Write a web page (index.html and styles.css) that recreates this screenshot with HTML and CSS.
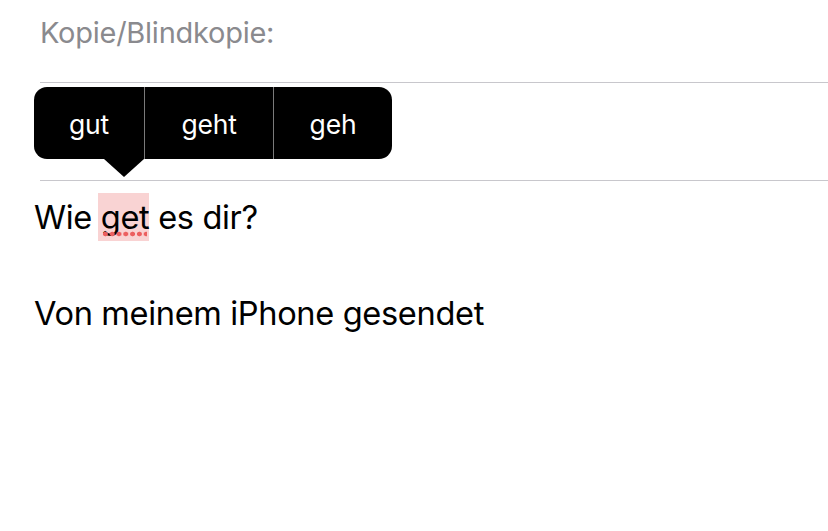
FILE: index.html
```html
<!DOCTYPE html>
<html lang="de">
<head>
<meta charset="utf-8">
<title>Mail</title>
<link rel="stylesheet" href="styles.css">
</head>
<body>
<div class="compose">
  <div class="field field-cc">
    <span class="label">Kopie/Blindkopie:</span>
  </div>
  <div class="field field-subject"></div>
  <div class="body">
    <p class="line">Wie <span class="misspelled">get<span class="dots"></span></span> es dir?</p>
    <p class="line empty">&nbsp;</p>
    <p class="line">Von meinem iPhone gesendet</p>
  </div>
  <div class="suggest">
    <div class="suggest-bar">
      <span class="opt opt-1">gut</span>
      <span class="opt opt-2">geht</span>
      <span class="opt opt-3">geh</span>
    </div>
    <div class="suggest-arrow"></div>
  </div>
</div>
</body>
</html>
```

FILE: styles.css
```css
html, body {
  margin: 0;
  padding: 0;
  background: #ffffff;
}
body {
  font-family: Inter, "Noto Sans", sans-serif;
  color: #000;
  width: 828px;
  height: 531px;
  overflow: hidden;
}
.compose {
  position: relative;
  height: 531px;
}
.field {
  margin-left: 40px;
  border-bottom: 1px solid #c8c7cc;
  box-sizing: border-box;
}
.field-cc {
  height: 83px;
  padding-top: 15px;
}
.label {
  font-size: 29px;
  line-height: 36px;
  color: #8a8a8e;
  letter-spacing: -0.25px;
}
.field-subject {
  height: 98px;
}
.body {
  padding-left: 34px;
  padding-top: 12px;
}
.line {
  margin: 0;
  font-size: 32.6px;
  line-height: 48px;
  letter-spacing: -0.35px;
}
.misspelled {
  position: relative;
  background: #f9d3d3;
  padding: 4px 0 4px 3px;
  margin-left: -3px;
}
.dots {
  position: absolute;
  left: 4px;
  right: 2px;
  bottom: 4px;
  height: 6px;
  background-image: radial-gradient(circle, #ec5f5f 2.1px, transparent 2.7px);
  background-size: 6.8px 6px;
  background-repeat: repeat-x;
}
.suggest {
  position: absolute;
  left: 34px;
  top: 87px;
}
.suggest-bar {
  display: flex;
  height: 72px;
  background: #000;
  border-radius: 13px;
  overflow: hidden;
}
.opt {
  display: flex;
  align-items: center;
  justify-content: center;
  color: #fff;
  font-size: 26.5px;
  letter-spacing: -0.2px;
  padding-top: 2px;
  box-sizing: border-box;
}
.opt-1 { width: 111px; border-right: 1px solid #7a7a7a; }
.opt-2 { width: 129px; border-right: 1px solid #7a7a7a; }
.opt-3 { width: 118px; }
.suggest-arrow {
  position: absolute;
  left: 70px;
  top: 72px;
  width: 0;
  height: 0;
  border-left: 20px solid transparent;
  border-right: 20px solid transparent;
  border-top: 18px solid #000;
}
```
